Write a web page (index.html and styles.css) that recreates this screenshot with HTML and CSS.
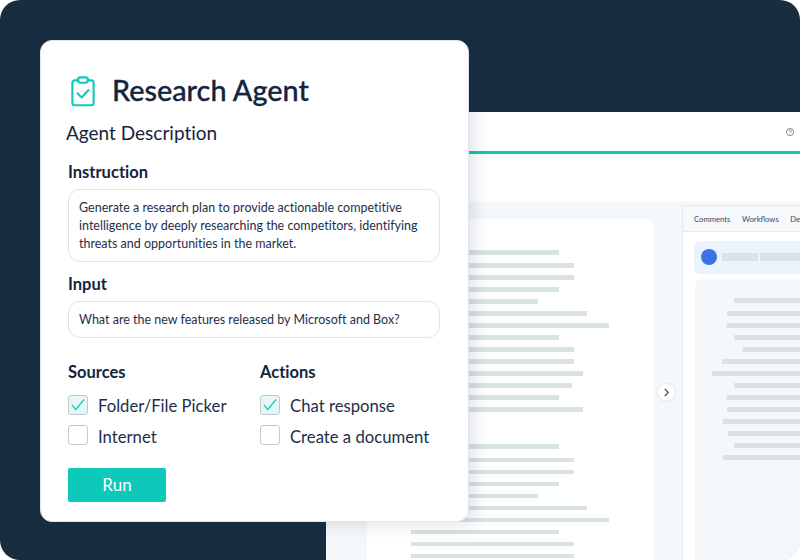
FILE: index.html
```html
<!DOCTYPE html>
<html lang="en">
<head>
<meta charset="utf-8">
<title>Research Agent</title>
<link rel="stylesheet" href="styles.css">
</head>
<body>
<div class="stage">
  <section class="app">
    <div class="toolbar"><svg class="help" viewBox="0 0 10 10"><circle cx="5" cy="5" r="3.6"/><path d="M3.9 4.1a1.15 1.15 0 1 1 1.7 1C5.1 5.4 5 5.6 5 6"/><path d="M5 6.9v.3"/></svg></div>
    <div class="subbar"></div>
    <div class="workspace">
      <div class="canvas">
        <div class="doc">
          <div class="lines">
            <i style="width:148px"></i><i style="width:163px"></i><i style="width:163px"></i><i style="width:148px"></i><i style="width:127px"></i><i style="width:176px"></i><i style="width:198px"></i><i style="width:148px"></i><i style="width:163px"></i><i style="width:163px"></i><i style="width:172px"></i><i style="width:161px"></i><i style="width:148px"></i><i style="width:172px"></i>
          </div>
          <div class="lines">
            <i style="width:148px"></i><i style="width:163px"></i><i style="width:163px"></i><i style="width:148px"></i><i style="width:127px"></i><i style="width:176px"></i><i style="width:198px"></i><i style="width:148px"></i><i style="width:163px"></i><i style="width:163px"></i>
          </div>
        </div>
        <button class="toggle"><svg viewBox="0 0 10 10"><path d="M3 1 7 5 3 9"/></svg></button>
      </div>
      <aside class="side">
        <nav class="tabs"><span>Comments</span><span>Workflows</span><span>Details</span></nav>
        <div class="side-body">
          <div class="user"><span class="avatar"></span><i class="bar b1"></i><i class="bar b2"></i></div>
          <div class="reply">
            <i style="margin-left:39px"></i><i style="margin-left:32px"></i><i style="margin-left:32px"></i><i style="margin-left:39px"></i><i style="margin-left:48px"></i><i style="margin-left:27px"></i><i style="margin-left:17px"></i><i style="margin-left:39px"></i><i style="margin-left:32px"></i><i style="margin-left:32px"></i><i style="margin-left:28px"></i><i style="margin-left:33px"></i><i style="margin-left:39px"></i><i style="margin-left:28px"></i>
          </div>
        </div>
      </aside>
    </div>
  </section>

  <section class="card">
    <header class="title">
      <svg class="clip" viewBox="0 0 26 32"><path d="M8 4.500H4a2.500 2.500 0 0 0-2.500 2.500v22A2.500 2.500 0 0 0 4 31.500h18a2.500 2.500 0 0 0 2.500-2.500V7A2.500 2.500 0 0 0 22 4.500h-4"/><rect x="7.500" y="1.300" width="11" height="5.700" rx="2.800"/><path d="m7 18.500 4.500 4.500L19 15"/></svg>
      <h1>Research Agent</h1>
    </header>
    <h2>Agent Description</h2>
    <h3 class="label">Instruction</h3>
    <p class="field tall">Generate a research plan to provide actionable competitive intelligence by deeply researching the competitors, identifying threats and opportunities in the market.</p>
    <h3 class="label input-label">Input</h3>
    <p class="field short">What are the new features released by Microsoft and Box?</p>
    <div class="options">
      <div class="group">
        <h3 class="label">Sources</h3>
        <label class="check on"><span class="box"><svg viewBox="0 0 18 18"><path d="m3 9 3.800 4.500L15 3.500"/></svg></span><span>Folder/File Picker</span></label>
        <label class="check off"><span class="box"></span><span>Internet</span></label>
      </div>
      <div class="group">
        <h3 class="label">Actions</h3>
        <label class="check on"><span class="box"><svg viewBox="0 0 18 18"><path d="m3 9 3.800 4.500L15 3.500"/></svg></span><span>Chat response</span></label>
        <label class="check off"><span class="box"></span><span>Create a document</span></label>
      </div>
    </div>
    <button class="run">Run</button>
  </section>
</div>
</body>
</html>
```

FILE: styles.css
```css
* { box-sizing: border-box; }
html, body { margin: 0; padding: 0; background: #fff; }
body { width: 800px; height: 560px; overflow: hidden; font-family: "Lato", "Open Sans", sans-serif; color: #14243f; font-variant-ligatures: none; }
.stage { position: relative; width: 800px; height: 560px; background: #192d41; border-radius: 20px; overflow: hidden; }

.app { position: absolute; left: 326px; top: 112px; width: 474px; height: 448px; background: #fff; display: flex; flex-direction: column; }
.toolbar { display: flex; justify-content: flex-end; align-items: center; padding: 0 5px 0 0; border-bottom: 3px solid #0dc9bb; height: 42px; flex: none; }
.help { width: 10px; height: 10px; fill: none; stroke: #555f6b; stroke-width: .7; }
.subbar { height: 48px; flex: none; }
.workspace { flex: 1; display: flex; background: #f5f8fb; min-height: 0; }
.canvas { position: relative; width: 356px; padding: 17px 0 0 41px; flex: none; }
.doc { width: 287px; height: 400px; background: #fff; border-radius: 6px 6px 0 0; padding: 31px 0 0 44px; }
.lines { display: flex; flex-direction: column; gap: 7.500px; margin-bottom: 32.500px; }
.lines i { display: block; height: 4.500px; background: #d9e3e3; }
.lines i:first-child, .reply i:first-child { margin-bottom: 1.300px; }
.toggle { position: absolute; left: 331.500px; top: 181.500px; width: 17px; height: 17px; border-radius: 50%; border: 0; padding: 0; background: #fff; box-shadow: 0 0 2px rgba(30,50,70,.25); display: flex; align-items: center; justify-content: center; }
.toggle svg { width: 9px; height: 9px; fill: none; stroke: #3d4754; stroke-width: 1.300; }
.side { flex: 1; background: #fff; border-left: 1px solid #e4eaf0; display: flex; flex-direction: column; margin-top: 3px; border-top: 1px solid #e4eaf0; min-width: 0; }
.tabs { height: 26px; flex: none; background: #f6f9fb; border-bottom: 1px solid #e4eaf0; display: flex; gap: 11.500px; align-items: center; padding-left: 11px; font: 7.700px "Lato", sans-serif; color: #3a4a63; white-space: nowrap; overflow: hidden; }
.side-body { flex: 1; padding: 9px 0 0 11px; display: flex; flex-direction: column; gap: 5.500px; min-height: 0; }
.user { height: 32.500px; flex: none; background: #ebf3fc; border-radius: 6px 0 0 6px; display: flex; align-items: center; padding-left: 6.500px; gap: 2px; }
.avatar { width: 16px; height: 16px; border-radius: 50%; background: #3b73e6; margin-right: 3px; flex: none; }
.bar { height: 8px; background: #d8e2ea; display: block; }
.b1 { width: 36px; }
.b2 { flex: 1; }
.reply { flex: 1; margin-left: 1px; background: #f5f8fb; border-radius: 8px 0 0 0; padding: 19px 0 0 0; display: flex; flex-direction: column; gap: 7.500px; }
.reply i { display: block; height: 4.500px; background: #d9e3e3; }

.card { position: absolute; left: 40px; top: 40px; width: 429px; height: 482px; background: #fff; border: 1px solid #dfe4f0; border-radius: 12px; box-shadow: 6px 4px 16px rgba(25,45,65,.12); padding: 32px 28px 0 27px; }
.title { display: flex; align-items: center; gap: 17px; height: 36px; padding-left: 3px; }
.clip { width: 24px; height: 32px; fill: none; stroke: #11c9bc; stroke-width: 2.300; stroke-linejoin: round; stroke-linecap: round; flex: none; }
h1 { margin: -2px 0 0; font-size: 28.800px; font-weight: 500; color: #14243f; line-height: 36px; -webkit-text-stroke: .3px #14243f; }
h2 { margin: 12px 0 0 -2px; font-size: 19px; font-weight: 400; line-height: 24px; color: #14243f; }
.label { margin: 0; font-size: 16.500px; font-weight: 700; line-height: 20px; color: #14243f; }
h2 + .label { margin-top: 17px; }
.field { margin: 7px 0 0; border: 1px solid #dde3ee; border-radius: 12px; padding: 0 10px; font-size: 12.500px; line-height: 18px; color: #1e2f4a; display: flex; align-items: center; }
.tall { height: 73px; }
.short { height: 37px; }
.input-label { margin-top: 12px; }
.options { display: flex; margin-top: 24px; }
.group { width: 192px; flex: none; }
.check { display: flex; align-items: center; gap: 10px; height: 20px; margin-top: 10px; font-size: 16.700px; color: #1e2f4a; white-space: nowrap; }
.group .label + .check { margin-top: 13px; }
.on span:last-child { margin-top: 2px; }
.off span:last-child { margin-top: 4px; }
.box { width: 20px; height: 20px; border: 1px solid #c4c8cd; border-radius: 3px; background: #fff; flex: none; display: flex; }
.on .box { background: #e6f7f6; }
.box svg { width: 18px; height: 18px; fill: none; stroke: #11c9bc; stroke-width: 1.200; }
.run { display: block; margin-top: 23px; width: 98px; height: 33.500px; border: 0; border-radius: 2px; background: #0cc9ba; color: #fff; font: 400 17px "Lato", sans-serif; }
```
